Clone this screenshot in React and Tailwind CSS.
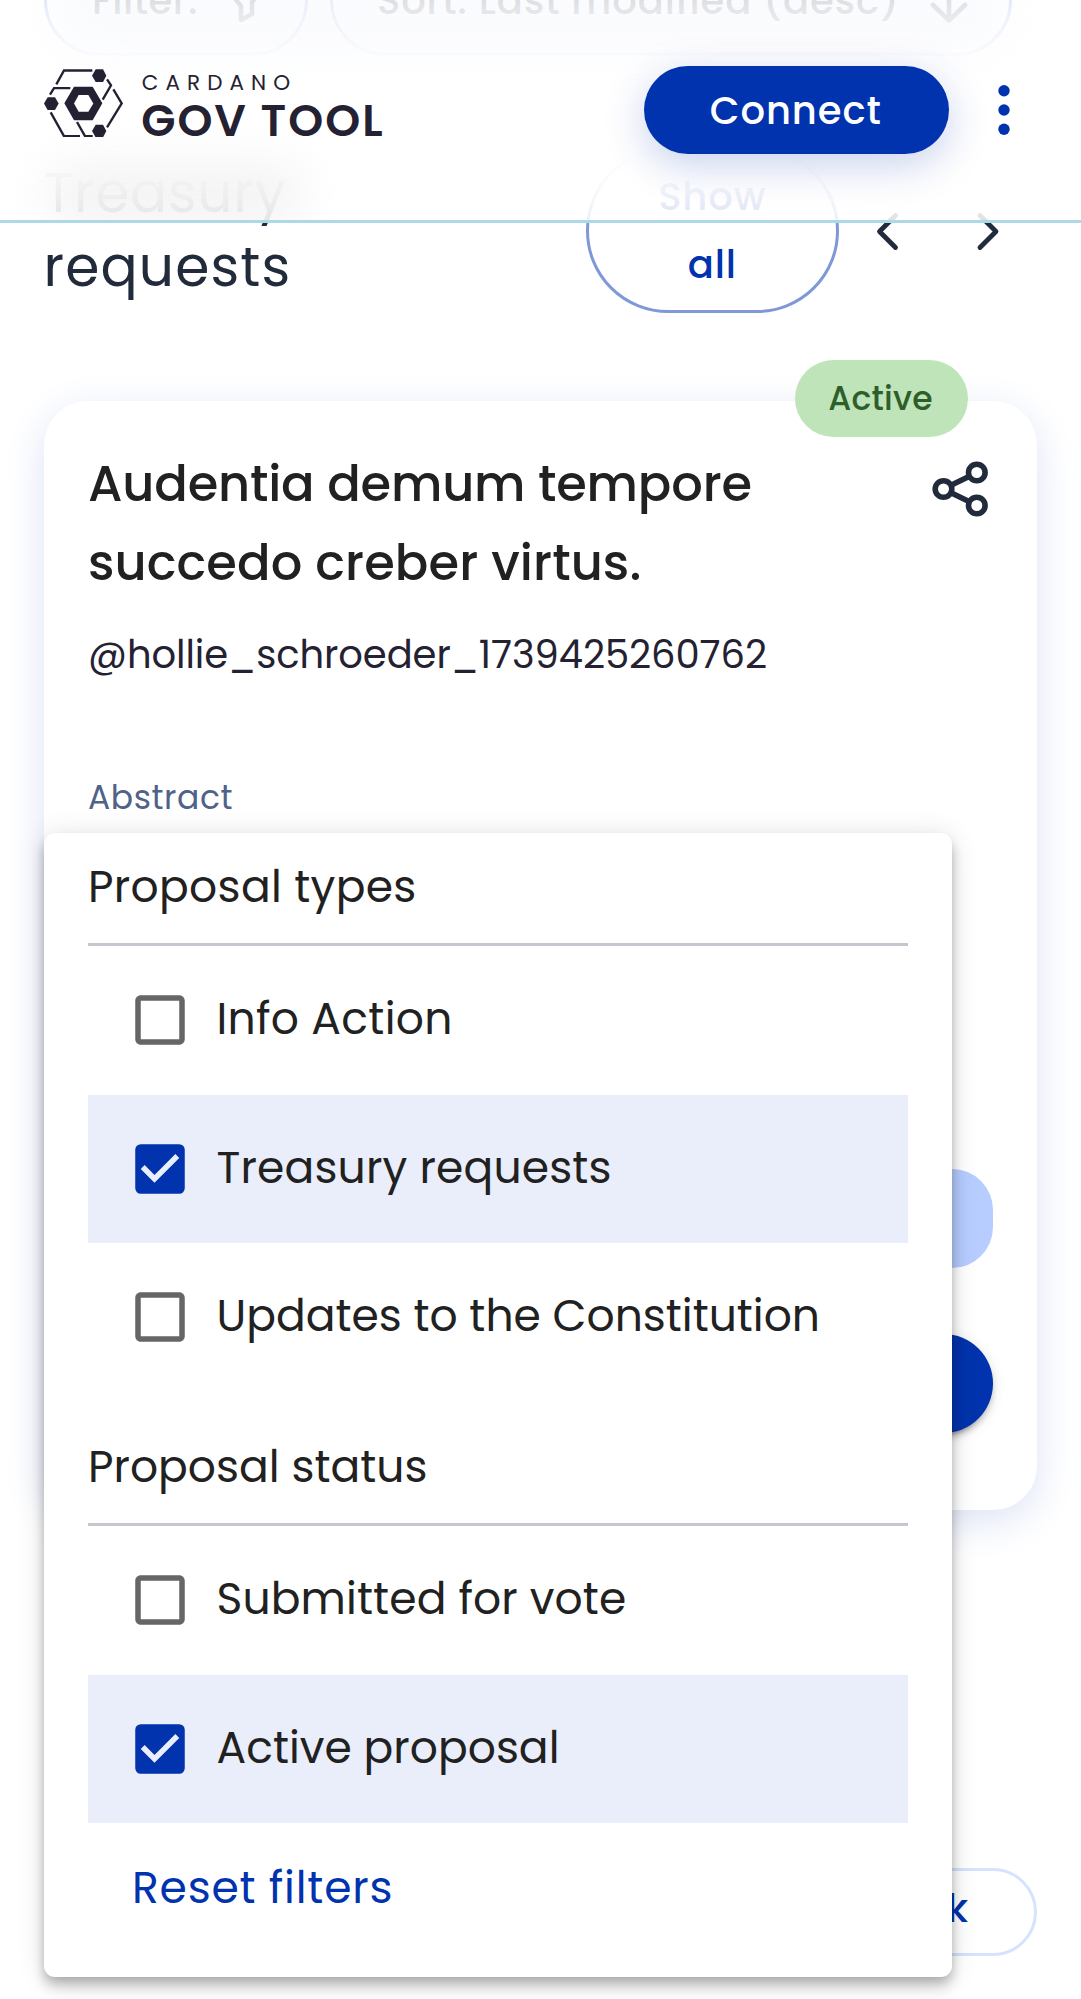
import React from "react";
import { MdCheckBox, MdCheckBoxOutlineBlank } from "react-icons/md";

function Logo() {
  return (
    <svg className="mt-[68.7px] h-[68.7px] w-[78.7px] shrink-0" viewBox="42 56 236 206" fill="none">
      <g stroke="#242232" strokeWidth="7">
        <path d="M79 102 L102 60.500 H187" />
        <path d="M231 87 L243 105 L218 148" />
        <path d="M250 117 L275 159 L231 231" />
        <path d="M60 133 L72 113.500 H121" />
        <path d="M62 186 L102 257.500 H150" />
        <path d="M141 215 L165 257.500 H188" />
      </g>
      <g fill="#242232">
        <path d="M186 76 L197 57 H219 L229 76 L219 95 H197 Z" />
        <path d="M42 159.500 L53 141 H75 L86 159.500 L75 179 H53 Z" />
        <path d="M186 242 L197 223 H219 L229 242 L219 261 H197 Z" />
        <path
          fillRule="evenodd"
          d="M103 159 L132 109 H188 L217 159 L188 210 H132 Z M132 159.500 L146 184 H175 L190 159.500 L175 134 H146 Z"
        />
      </g>
    </svg>
  );
}

function Header() {
  return (
    <header className="absolute inset-x-0 top-0 h-[223px] overflow-hidden border-b-[3px] border-[#add8e6] bg-[linear-gradient(180deg,rgba(255,255,255,0.77)_0px,rgba(255,255,255,0.85)_18px,rgba(255,255,255,0.98)_56px,rgba(255,255,255,0.99)_160px,rgba(255,255,255,0.945)_190px,rgba(255,255,255,0.86)_220px)]">
      <div className="absolute top-[-30px] left-[50px] h-[80px] w-[960px] rounded-full bg-[#f6f8fd]/50 blur-[24px]" />
      <div className="absolute top-[162px] left-[45px] h-[66px] w-[260px] rounded-full bg-[#ededed]/60 blur-[22px]" />
      <div className="relative flex h-full items-start pr-[71px] pl-[44px]">
        <Logo />
        <div className="mt-[72.400px] ml-[19px] flex flex-col whitespace-nowrap text-[#242232]">
          <span className="text-[21.500px] leading-[21px] font-normal tracking-[7.100px]">CARDANO</span>
          <span className="mt-[5.400px] -ml-[0.500px] text-[44.500px] leading-[44px] font-semibold tracking-[2.020px]">GOV TOOL</span>
        </div>
        <button className="mt-[66px] ml-auto h-[88px] w-[305.500px] rounded-full bg-[#0033ad] pt-[2px] pr-[7px] pl-[6px] text-[38.500px] font-medium tracking-[0.900px] text-white shadow-[0_11px_41px_rgba(0,51,173,0.22)]">
          Connect
        </button>
        <svg className="mt-[80px] ml-[49px] h-[60px] w-[12px]" viewBox="0 0 12 60" fill="#0033ad">
          <circle cx="6" cy="10.700" r="5.700" />
          <circle cx="6" cy="30" r="5.700" />
          <circle cx="6" cy="49.300" r="5.700" />
        </svg>
      </div>
    </header>
  );
}

function Toolbar() {
  const pill =
    "flex h-[112px] items-center rounded-full border-[3px] border-[#7f98d6] text-[38.500px] font-medium whitespace-nowrap text-[#212121]";
  return (
    <div className="-mt-[56px] flex gap-[22.500px] pl-[44px]">
      <div className={pill + " w-[263.500px] pl-[45px]"}>
        <span className="w-[106px] pt-[1px] tracking-[0.500px]">Filter:</span>
        <svg className="ml-[21px] h-[52px] w-[52px] shrink-0" viewBox="219 -26 52 52" fill="none" stroke="#212b3b" strokeWidth="4.500" strokeLinejoin="round">
          <path d="M221 -19 H270 L252 2 V14 L241 20 V6 Z" />
        </svg>
      </div>
      <div className={pill + " w-[681.500px] pl-[44px]"}>
        <span className="w-[521px] pt-[1px] tracking-[0.900px]">Sort: Last modified (desc)</span>
        <svg className="ml-[29px] h-[52px] w-[44px] shrink-0" viewBox="927 -26 44 52" fill="none" stroke="#212b3b" strokeWidth="4.600" strokeLinecap="round" strokeLinejoin="round">
          <path d="M949 -20 V20 M933 5 L949 20.500 L965 5" />
        </svg>
      </div>
    </div>
  );
}

function SectionHeading() {
  return (
    <div className="mt-[92px] flex h-[165px] items-center pl-[43.500px]">
      <h2 className="-mt-[2px] w-[300px] text-[55px] leading-[73.700px] text-[#212b3b]">
        <span className="block tracking-[0.700px]">Treasury</span>
        <span className="block tracking-[1.170px]">requests</span>
      </h2>
      <button className="ml-[242.500px] h-[165px] w-[252.500px] rounded-[82px] border-[3px] border-[#7f98d6] px-[60px] text-center text-[38.500px] leading-[67.500px] font-medium tracking-[0.900px] text-[#0033ad]">
        Show all
      </button>
      <svg className="ml-[33.500px] h-[48px] w-[134px]" viewBox="872 206.500 134 48" fill="none" stroke="#212b3b" strokeWidth="4.800" strokeLinecap="round" strokeLinejoin="round">
        <path d="M895.500 215 L879.500 231 L895.500 247" />
        <path d="M980 215 L996 231 L980 247" />
      </svg>
    </div>
  );
}

function ProposalCard() {
  return (
    <article className="relative mx-[44px] mt-[88px] flex h-[1108.500px] flex-col rounded-[44px] bg-white pt-[44px] pr-[44px] pl-[44px] shadow-[0_11px_41px_#dde3f5]">
      <span className="absolute top-[-41px] right-[69px] flex h-[77px] w-[173px] items-center justify-center rounded-full bg-[#c0e4ba] pr-[2px] text-[33px] font-medium tracking-[0.240px] text-[#2e5e2a]">
        Active
      </span>
      <div className="flex justify-between">
        <h3 className="w-[720px] text-[49.500px] leading-[78.700px] font-medium text-[#212121]">
          <span className="block tracking-[-0.180px]">Audentia demum tempore</span>
          <span className="block tracking-[0.100px]">succedo creber virtus.</span>
        </h3>
        <svg className="mt-[15px] mr-[3.500px] h-[58px] w-[60px]" viewBox="929.500 460.500 60 58" fill="none" stroke="#212b3b" strokeWidth="5.600">
          <circle cx="943" cy="489.500" r="8.300" />
          <circle cx="976.300" cy="473" r="8.300" />
          <circle cx="976.300" cy="506" r="8.300" />
          <path d="M950.500 485.800 L969 476.700 M950.500 493.200 L969 502.300" />
        </svg>
      </div>
      <p className="mt-[23.500px] text-[38.500px] leading-[58px] tracking-[-0.080px] text-[#242232]">
        @hollie_schroeder_1739425260762
      </p>
      <p className="mt-[94px] text-[33px] leading-[40px] tracking-[0.580px] text-[#506288]">Abstract</p>
      <div className="mt-[351px] h-[99px] shrink-0 rounded-[41px] bg-[#b7ccff]" />
      <div className="mt-[66px] h-[99px] shrink-0 rounded-full bg-[#0033ad] shadow-[0_8.250px_2.750px_-5.500px_rgba(0,0,0,0.2),0_5.500px_5.500px_rgba(0,0,0,0.14),0_2.750px_13.750px_rgba(0,0,0,0.12)]" />
    </article>
  );
}

function Option({ label, spacing, checked }) {
  return (
    <div className={"flex h-[148.500px] items-center pl-[38.500px] " + (checked ? "bg-[#eaeefa]" : "")}>
      {checked ? (
        <MdCheckBox className="size-[66px] shrink-0 text-[#0033ad]" />
      ) : (
        <MdCheckBoxOutlineBlank className="size-[66px] shrink-0 text-[#666666]" />
      )}
      <span className={"ml-[24px] pb-[2px] text-[44px] leading-[60px] whitespace-nowrap " + spacing}>{label}</span>
    </div>
  );
}

function FilterMenu() {
  return (
    <div className="absolute top-[833px] left-[44px] h-[1144px] w-[907.500px] rounded-[11px] bg-white px-[44px] text-[#212121] shadow-[0_5.500px_11px_-2.750px_rgba(0,0,0,0.2),0_11px_13.750px_rgba(0,0,0,0.14),0_2.750px_27.500px_rgba(0,0,0,0.12)] [font-kerning:none]">
      <div className="flex h-[113px] items-center border-b-[3px] border-[#c8c5d0] pb-[3px] text-[44px] tracking-[0.330px]">
        Proposal types
      </div>
      <Option label="Info Action" spacing="tracking-[0.300px]" />
      <Option label="Treasury requests" spacing="tracking-[0.180px]" checked />
      <Option label="Updates to the Constitution" spacing="tracking-[0px]" />
      <div className="flex h-[134.500px] items-center border-b-[3px] border-[#c8c5d0] pt-[19px] text-[44px] tracking-[0.020px]">
        Proposal status
      </div>
      <Option label="Submitted for vote" spacing="tracking-[0.120px]" />
      <Option label="Active proposal" spacing="tracking-[0.020px]" checked />
      <button className="flex h-[128px] items-center pt-[2px] pl-[44px] text-[44px] tracking-[0.800px] text-[#0033ad]">
        Reset filters
      </button>
    </div>
  );
}

export default function App() {
  return (
    <div className="relative flex h-[1999px] w-[1081px] flex-col overflow-hidden bg-white font-['Poppins','Inter',sans-serif]">
      <Toolbar />
      <SectionHeading />
      <ProposalCard />
      <button className="mt-[358px] mr-[44px] flex h-[88px] w-[500px] shrink-0 items-center justify-end self-end rounded-full border-[3px] border-[#d6e2ff] pr-[66px] pb-[5px] text-[38.500px] font-medium text-[#0033ad]">
        Feedback
      </button>
      <Header />
      <FilterMenu />
    </div>
  );
}
